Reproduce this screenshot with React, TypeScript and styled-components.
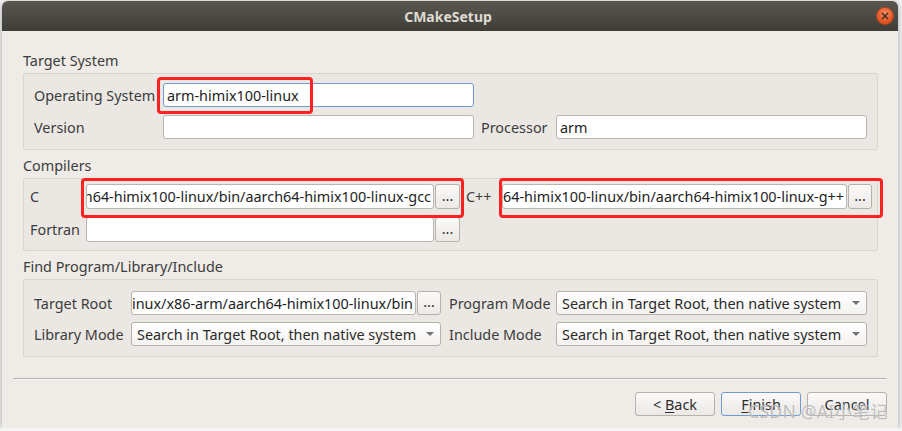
import React from 'react';
import styled, { createGlobalStyle } from 'styled-components';

const GlobalStyle = createGlobalStyle`
  html, body {
    margin: 0;
    padding: 0;
    background: #f4f4f4;
  }
  body {
    font-family: 'Noto Sans', 'Open Sans', sans-serif;
    font-size: 14.4px;
    color: #3c3c3c;
  }
  * {
    box-sizing: border-box;
  }
`;

const TOOLCHAIN = '/opt/hisi-linux/x86-arm/aarch64-himix100-linux';

function App() {
  return (
    <>
      <GlobalStyle />
      <Window>
        <TitleBar>
          <span />
          <Title>CMakeSetup</Title>
          <CloseButton>
            <svg width="8" height="8" viewBox="0 0 8 8">
              <path d="M1 1 L7 7 M7 1 L1 7" stroke="#3a2a22" strokeWidth="1.4" />
            </svg>
          </CloseButton>
        </TitleBar>

        <Content>
          <Section>
            <SectionTitle>Target System</SectionTitle>
            <GroupBox $pad="9px 10px 10px 10px">
              <FormGrid $cols="129px 311px 82px minmax(0, 1fr)" $row="24px" $gap="8px">
                <Label>Operating System</Label>
                <Field $focused>arm-himix100-linux</Field>
                <span />
                <span />
                <Label>Version</Label>
                <Field />
                <Label $indent="7px">Processor</Label>
                <Field>arm</Field>
              </FormGrid>
            </GroupBox>
          </Section>

          <Section>
            <SectionTitle>Compilers</SectionTitle>
            <GroupBox $pad="5px 5px 8px 6px">
              <FormGrid $cols="56px 374px 42px minmax(0, 1fr)" $row="25px" $gap="8px">
                <Label>C</Label>
                <PathRow>
                  <Field $end>{`${TOOLCHAIN}/bin/aarch64-himix100-linux-gcc`}</Field>
                  <ToolButton $w="25px">...</ToolButton>
                </PathRow>
                <Label $indent="6px">C++</Label>
                <PathRow>
                  <Field $end>{`${TOOLCHAIN}/bin/aarch64-himix100-linux-g++`}</Field>
                  <ToolButton $w="24px">...</ToolButton>
                </PathRow>
                <Label>Fortran</Label>
                <PathRow>
                  <Field />
                  <ToolButton $w="25px">...</ToolButton>
                </PathRow>
              </FormGrid>
            </GroupBox>
          </Section>

          <Section>
            <SectionTitle>Find Program/Library/Include</SectionTitle>
            <GroupBox $pad="11px 10px 10px 10px">
              <FormGrid $cols="97px 310px 115px minmax(0, 1fr)" $row="24px" $gap="7px">
                <Label>Target Root</Label>
                <PathRow>
                  <Field $end>{`${TOOLCHAIN}/bin`}</Field>
                  <ToolButton $w="24px">...</ToolButton>
                </PathRow>
                <Label $indent="8px">Program Mode</Label>
                <Combo>
                  <span>Search in Target Root, then native system</span>
                  <Arrow />
                </Combo>
                <Label>Library Mode</Label>
                <Combo>
                  <span>Search in Target Root, then native system</span>
                  <Arrow />
                </Combo>
                <Label $indent="8px">Include Mode</Label>
                <Combo>
                  <span>Search in Target Root, then native system</span>
                  <Arrow />
                </Combo>
              </FormGrid>
            </GroupBox>
          </Section>
        </Content>

        <Footer>
          <Separator />
          <ButtonRow>
            <DialogButton>
              <span>
                &lt; <u>B</u>ack
              </span>
            </DialogButton>
            <DialogButton $focused>
              <span>
                <u>F</u>inish
              </span>
            </DialogButton>
            <DialogButton>
              <span>Cancel</span>
            </DialogButton>
          </ButtonRow>
        </Footer>

        <Highlight style={{ left: 155, top: 76, width: 156, height: 37 }} />
        <Highlight style={{ left: 79, top: 177, width: 383, height: 40 }} />
        <Highlight style={{ left: 497, top: 177, width: 384, height: 40 }} />
        <Watermark>CSDN @AI小笔记</Watermark>
      </Window>
    </>
  );
}

export default App;

const Window = styled.div`
  position: relative;
  display: flex;
  flex-direction: column;
  width: 896px;
  height: 427px;
  margin: 1px 0 0 2px;
  background: #efebe7;
  border-radius: 6px 6px 0 0;
  box-shadow: 0 1px 6px rgba(0, 0, 0, 0.35);
`;
const TitleBar = styled.div`
  display: grid;
  grid-template-columns: 1fr auto 1fr;
  align-items: center;
  height: 30px;
  padding-right: 4px;
  background: linear-gradient(#5a5750, #3e3d38);
  border-radius: 6px 6px 0 0;
`;
const Title = styled.span`
  font-size: 14px;
  font-weight: bold;
  color: #dfdbd2;
`;
const CloseButton = styled.div`
  justify-self: end;
  display: flex;
  align-items: center;
  justify-content: center;
  width: 18px;
  height: 18px;
  border-radius: 50%;
  background: radial-gradient(circle at 50% 35%, #f68a5e, #e0501f 70%);
  border: 1px solid #b3461d;
`;
const Content = styled.div`
  display: flex;
  flex-direction: column;
  gap: 7px;
  padding: 21px 20px 0 21px;
`;
const Section = styled.div`
  display: flex;
  flex-direction: column;
`;
const SectionTitle = styled.div`
  line-height: 18px;
  margin-bottom: 3px;
  color: #3c3c3c;
`;
const GroupBox = styled.div<{ $pad: string }>`
  padding: ${(p) => p.$pad};
  background: #ebe8e4;
  border: 1px solid #d8d4cf;
  border-radius: 2px;
`;
const FormGrid = styled.div<{ $cols: string; $row: string; $gap: string }>`
  display: grid;
  grid-template-columns: ${(p) => p.$cols};
  grid-auto-rows: ${(p) => p.$row};
  row-gap: ${(p) => p.$gap};
  align-items: stretch;
`;
const Label = styled.div<{ $indent?: string }>`
  display: flex;
  align-items: center;
  padding-left: ${(p) => p.$indent || '0'};
  white-space: nowrap;
  color: #3c3c3c;
`;
const Field = styled.div<{ $focused?: boolean; $end?: boolean }>`
  flex: 1;
  display: flex;
  align-items: center;
  justify-content: ${(p) => (p.$end ? 'flex-end' : 'flex-start')};
  min-width: 0;
  overflow: hidden;
  padding: 0 2px 0 3px;
  white-space: nowrap;
  background: #ffffff;
  border: 1px solid ${(p) => (p.$focused ? '#6e9bd1' : '#b9b5b0')};
  border-radius: 3px;
  color: #1e1e1e;
`;
const PathRow = styled.div`
  display: flex;
  gap: 1px;
  min-width: 0;
`;
const ToolButton = styled.div<{ $w: string }>`
  display: flex;
  align-items: center;
  justify-content: center;
  flex: 0 0 ${(p) => p.$w};
  padding-bottom: 3px;
  background: linear-gradient(#fbfaf9, #ece9e6);
  border: 1px solid #b5b1ab;
  border-radius: 3px;
  color: #2e2e2e;
`;
const Combo = styled.div`
  display: flex;
  align-items: center;
  justify-content: space-between;
  padding: 0 6px 0 5px;
  white-space: nowrap;
  overflow: hidden;
  background: linear-gradient(#ffffff, #f4f2f0);
  border: 1px solid #b5b1ab;
  border-radius: 3px;
  color: #2a2a2a;
`;
const Arrow = styled.span`
  flex: 0 0 auto;
  width: 0;
  height: 0;
  border-left: 4px solid transparent;
  border-right: 4px solid transparent;
  border-top: 4px solid #707070;
`;
const Footer = styled.div`
  margin-top: auto;
  padding: 0 11px 12px 11px;
`;
const Separator = styled.div`
  height: 2px;
  border-top: 1px solid #b8b3ad;
  border-bottom: 1px solid #f7f5f3;
`;
const ButtonRow = styled.div`
  display: flex;
  justify-content: flex-end;
  gap: 6px;
  margin-top: 12px;
`;
const DialogButton = styled.div<{ $focused?: boolean }>`
  display: flex;
  align-items: center;
  justify-content: center;
  width: 80px;
  height: 24px;
  background: linear-gradient(#fbfaf9, #ebe8e5);
  border: 1px solid ${(p) => (p.$focused ? '#6e9bd1' : '#b5b1ab')};
  border-radius: 3px;
  color: #2e2e2e;
  u {
    text-underline-offset: 2px;
  }
`;
const Highlight = styled.div`
  position: absolute;
  border: 3px solid #ff2121;
  border-radius: 4px;
  pointer-events: none;
`;
const Watermark = styled.div`
  position: absolute;
  right: 10px;
  bottom: 5px;
  font-family: 'Noto Sans', 'Noto Sans CJK SC', sans-serif;
  font-size: 17.5px;
  letter-spacing: 0.3px;
  color: rgba(135, 135, 135, 0.55);
  text-shadow: 0 0 1px rgba(255, 255, 255, 0.9);
  pointer-events: none;
`;
